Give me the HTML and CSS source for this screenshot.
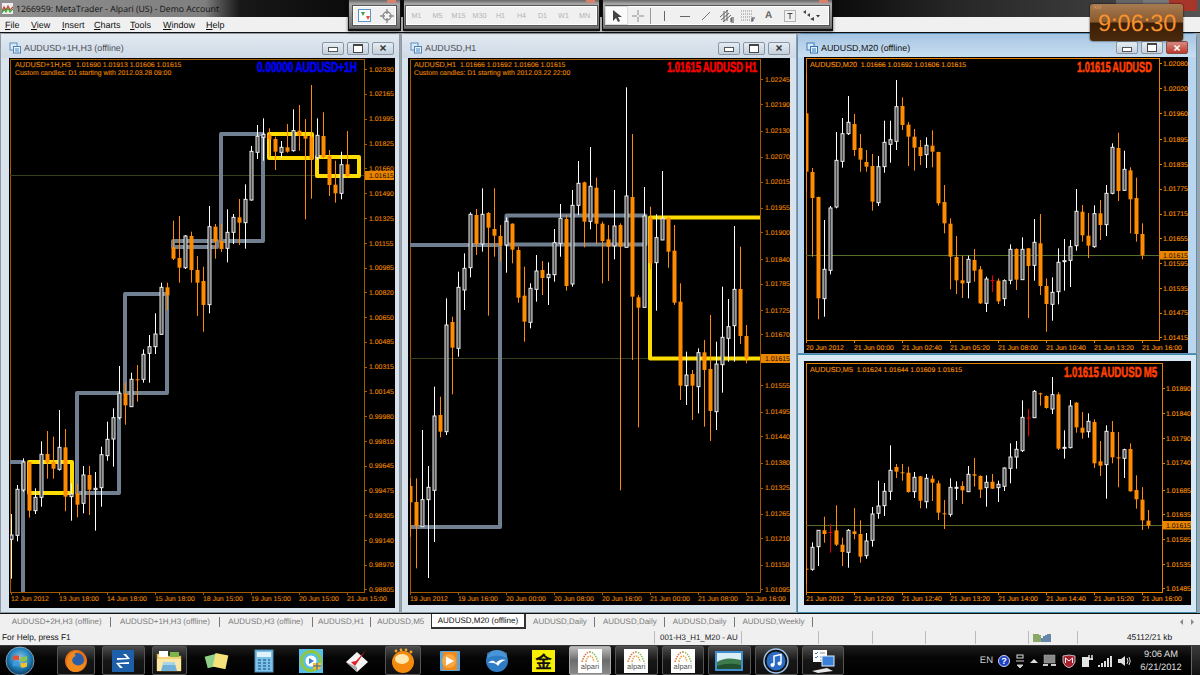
FILE: index.html
```html
<!DOCTYPE html>
<html lang="en">
<head>
<meta charset="utf-8">
<title>1266959: MetaTrader - Alpari (US) - Demo Account</title>
<link rel="stylesheet" href="styles.css">
</head>
<body>
<div class="app">
  <header class="titlebar">
    <svg class="appicon" viewBox="0 0 11 11" width="11" height="11"><rect width="11" height="11" fill="#eee"/><path d="M0 8 L2 4 L4 7 L6 3 L8 7 L11 4" fill="none" stroke="#d33" stroke-width="1.2"/><path d="M0 10 L2 6 L4 9 L6 5 L8 9 L11 6" fill="none" stroke="#3a3" stroke-width="1.2"/></svg>
    <span class="apptitle">1266959: MetaTrader - Alpari (US) - Demo Account</span>
    <div class="caption"><i class="cap-min"></i><i class="cap-max"></i><i class="cap-close"></i></div>
  </header>
  <nav class="menubar">
    <span class="m1"><u>F</u>ile</span><span class="m2"><u>V</u>iew</span><span class="m3"><u>I</u>nsert</span><span class="m4"><u>C</u>harts</span><span class="m5"><u>T</u>ools</span><span class="m6"><u>W</u>indow</span><span class="m7"><u>H</u>elp</span>
  </nav>

  <main class="mdi">
    <section class="win win1">
      <div class="wintitle"><svg class="winicon" viewBox="0 0 12 12" width="12" height="12"><rect x="1" y="1" width="7" height="7" fill="#dbe9f7" stroke="#5b8fc0"/><rect x="4.500" y="4.500" width="7" height="6.500" fill="#eaf3fb" stroke="#4a82b8"/><path d="M6 7h4M6 9h4" stroke="#4a82b8"/></svg><span>AUDUSD+1H,H3 (offline)</span><div class="winbtns"><b class="wb wb-min"></b><b class="wb wb-max"></b><b class="wb wb-x">×</b></div></div>
      <div class="chart" id="c1"></div>
    </section>
    <section class="win win2">
      <div class="wintitle"><svg class="winicon" viewBox="0 0 12 12" width="12" height="12"><rect x="1" y="1" width="7" height="7" fill="#dbe9f7" stroke="#5b8fc0"/><rect x="4.500" y="4.500" width="7" height="6.500" fill="#eaf3fb" stroke="#4a82b8"/><path d="M6 7h4M6 9h4" stroke="#4a82b8"/></svg><span>AUDUSD,H1</span><div class="winbtns"><b class="wb wb-min"></b><b class="wb wb-max"></b><b class="wb wb-x">×</b></div></div>
      <div class="chart" id="c2"></div>
    </section>
    <section class="win win3">
      <div class="wintitle"><svg class="winicon" viewBox="0 0 12 12" width="12" height="12"><rect x="1" y="1" width="7" height="7" fill="#dbe9f7" stroke="#3b7fc0"/><rect x="4.500" y="4.500" width="7" height="6.500" fill="#eaf3fb" stroke="#2e72b4"/><path d="M6 7h4M6 9h4" stroke="#2e72b4"/></svg><span>AUDUSD,M20 (offline)</span><div class="winbtns"><b class="wb wb-min"></b><b class="wb wb-max"></b><b class="wb wb-x wb-red">×</b></div></div>
      <div class="chart" id="c3"></div>
    </section>
    <section class="win win4">
      <div class="chart" id="c4"></div>
    </section>
  </main>

  <div class="tabs">
    <span class="tab">AUDUSD+2H,H3 (offline)</span>
    <span class="tab">AUDUSD+1H,H3 (offline)</span>
    <span class="tab">AUDUSD,H3 (offline)</span>
    <span class="tab tab-h1">AUDUSD,H1</span>
    <span class="tab tab-plain">AUDUSD,M5</span>
    <span class="tab tab-on">AUDUSD,M20 (offline)</span>
    <span class="tab tab-day">AUDUSD,Daily</span>
    <span class="tab tab-day">AUDUSD,Daily</span>
    <span class="tab tab-day">AUDUSD,Daily</span>
    <span class="tab tab-day">AUDUSD,Weekly</span>
    <span class="tabarrows">
      <svg viewBox="0 0 16 8" width="16" height="8"><path d="M4 1 L1 4 L4 7Z" fill="#888"/><path d="M12 1 L15 4 L12 7Z" fill="#888"/></svg>
    </span>
  </div>

  <div class="statusbar">
    <span>For Help, press F1</span>
    <span class="st-profile">001-H3_H1_M20 - AU</span>
    <span></span><span></span><span></span><span></span><span></span>
    <span class="st-conn"><svg viewBox="0 0 18 9" width="18" height="9"><path d="M1 9V1M3 9V1M5 9V1M7 9V2" stroke="#5d8a2c" stroke-width="1.400"/><path d="M9 9V5M11 9V3M13 9V2M15 9V1M17 9V1" stroke="#2b5a8c" stroke-width="1.400"/></svg></span>
    <span class="st-kb">45112/21 kb</span>
  </div>

  <footer class="taskbar">
    <div class="start">
      <svg viewBox="0 0 30 30" width="30" height="30"><defs><radialGradient id="orb" cx="50%" cy="40%" r="60%"><stop offset="0" stop-color="#8cc8ee"/><stop offset=".6" stop-color="#1f7fb8"/><stop offset="1" stop-color="#0a3a60"/></radialGradient></defs><circle cx="15" cy="15" r="14" fill="url(#orb)" stroke="#c8d8e4" stroke-opacity=".6"/><path d="M8 10 q3-1.500 6 0 v4.500 q-3-1.500-6 0Z" fill="#e8502a"/><path d="M15.500 10.500 q3 1.500 6.500-.5 v4.500 q-3.500 2-6.500.5Z" fill="#8ec63f"/><path d="M8 16 q3-1.500 6 0 v4.500 q-3-1.500-6 0Z" fill="#3d9be0"/><path d="M15.500 16.500 q3 1.500 6.500-.5 v4.500 q-3.500 2-6.500.5Z" fill="#f6c02c"/></svg>
      <i class="grip"></i>
    </div>
    <div class="tasks">
      <div class="task on slim"><svg viewBox="0 0 24 24" width="24" height="24"><circle cx="12" cy="12" r="11" fill="#e8701a"/><circle cx="13" cy="11" r="7" fill="#2a5fa8"/><path d="M3 14 C3 6 9 1 16 2 C10 3 10 6 12 7 C8 8 7 12 10 15 C14 18 19 16 22 11 C22 18 17 23 11 23 C6 23 3 19 3 14Z" fill="#f08a1c"/></svg></div>
      <div class="task on"><svg viewBox="0 0 24 24" width="24" height="24"><rect x="1" y="1" width="22" height="22" fill="#1d5fa8"/><path d="M6 9 H16 L12 5 H15 L19 10 L6 11Z M18 15 H8 L12 19 H9 L5 14 L18 13Z" fill="#fff"/></svg></div>
      <div class="task on slim"><svg viewBox="0 0 28 24" width="28" height="24"><path d="M2 5 H11 L13 7 H26 V22 H2Z" fill="#f3d37a" stroke="#b8963c" stroke-width=".6"/><rect x="4" y="2" width="9" height="6" fill="#fff"/><rect x="15" y="3" width="9" height="5" fill="#7ab648"/><path d="M2 10 H26 V22 H2Z" fill="#fbe7a6"/><path d="M8 15 H20 L22 22 H6Z" fill="#6fb1d8"/><rect x="8" y="13" width="12" height="3" fill="#a8d4ec"/></svg></div>
      <div class="task"><svg viewBox="0 0 26 24" width="26" height="24"><rect x="2" y="6" width="12" height="12" fill="#8ed08a" transform="rotate(-15 8 12)"/><rect x="10" y="5" width="13" height="14" fill="#f6e27a" transform="rotate(12 16 12)"/></svg></div>
      <div class="task"><svg viewBox="0 0 22 24" width="22" height="24"><rect x="2" y="1" width="18" height="22" fill="#7cc0e8" stroke="#4f8fb8"/><rect x="4" y="3" width="14" height="5" fill="#dff1fb"/><path d="M5 11h3M10 11h3M15 11h2M5 14h3M10 14h3M15 14h2M5 17h3M10 17h3M15 17h2M5 20h3M10 20h3M15 20h2" stroke="#2f6f9c" stroke-width="1.500"/></svg></div>
      <div class="task"><svg viewBox="0 0 26 26" width="26" height="26"><rect x="1" y="1" width="24" height="24" fill="#5ac0e8"/><circle cx="13" cy="13" r="9.500" fill="none" stroke="#8fc840" stroke-width="3"/><circle cx="13" cy="13" r="5.500" fill="#fff"/><path d="M11 10 L16 13 L11 16Z" fill="#3a7fd0"/><path d="M15 15 h8 v5 q-4 4-8 0Z" fill="#f6c02c"/><path d="M19 15v7M15 18h8" stroke="#2d60b0"/></svg></div>
      <div class="task"><svg viewBox="0 0 24 24" width="24" height="24"><path d="M12 3 L23 13 L12 23 L1 13Z" fill="#f4f4f4"/><path d="M6 13 L10 17 L21 1 L11 12Z" fill="#e21f26"/><path d="M1 13 L12 23 L12 18Z" fill="#aaa"/></svg></div>
      <div class="task on slim"><svg viewBox="0 0 26 26" width="26" height="26"><circle cx="13" cy="14" r="11" fill="#f58a0c"/><ellipse cx="12" cy="11" rx="7" ry="5" fill="#ffe9b0"/><circle cx="6" cy="3" r="1.400" fill="#f6a623"/><circle cx="11" cy="2" r="1.400" fill="#f6a623"/><circle cx="16" cy="2" r="1.400" fill="#f6a623"/><circle cx="21" cy="4" r="1.400" fill="#f6a623"/></svg></div>
      <div class="task"><svg viewBox="0 0 24 24" width="24" height="24"><rect x="2" y="2" width="20" height="20" rx="1" fill="#5ba4d4"/><rect x="5" y="3" width="14" height="18" fill="#f08a1c"/><circle cx="11" cy="12" r="7" fill="#f9a640"/><path d="M8 7.500 L16 12 L8 16.500Z" fill="#fff"/></svg></div>
      <div class="task"><svg viewBox="0 0 24 24" width="24" height="24"><circle cx="12" cy="12" r="11" fill="#2e7cc4"/><path d="M2 9 Q12 4 22 9 V4 Q12-2 2 4Z" fill="#5ba6e4" opacity=".6"/><path d="M3 14 Q8 9 11 14 Q15 9 21 11 Q16 12 13 17 Q10 13 3 14Z" fill="#fff"/></svg></div>
      <div class="task"><div class="goldbox">金</div></div>
      <div class="task on hot"><div class="alpari"><svg viewBox="0 0 20 12" width="20" height="12"><path d="M2 12 Q5 2 10 2" fill="none" stroke="#e0703a" stroke-width="1.500" stroke-dasharray="1.500 1"/><path d="M18 12 Q15 2 10 2" fill="none" stroke="#8cc050" stroke-width="1.500" stroke-dasharray="1.500 1"/><path d="M6 12 Q7 6 10 6 Q13 6 14 12" fill="none" stroke="#e8a040" stroke-width="1.500" stroke-dasharray="1.500 1"/></svg><span>alpari</span></div></div>
      <div class="task on"><div class="alpari"><svg viewBox="0 0 20 12" width="20" height="12"><path d="M2 12 Q5 2 10 2" fill="none" stroke="#e0703a" stroke-width="1.500" stroke-dasharray="1.500 1"/><path d="M18 12 Q15 2 10 2" fill="none" stroke="#8cc050" stroke-width="1.500" stroke-dasharray="1.500 1"/><path d="M6 12 Q7 6 10 6 Q13 6 14 12" fill="none" stroke="#e8a040" stroke-width="1.500" stroke-dasharray="1.500 1"/></svg><span>alpari</span></div></div>
      <div class="task on"><div class="alpari"><svg viewBox="0 0 20 12" width="20" height="12"><path d="M2 12 Q5 2 10 2" fill="none" stroke="#e0703a" stroke-width="1.500" stroke-dasharray="1.500 1"/><path d="M18 12 Q15 2 10 2" fill="none" stroke="#8cc050" stroke-width="1.500" stroke-dasharray="1.500 1"/><path d="M6 12 Q7 6 10 6 Q13 6 14 12" fill="none" stroke="#e8a040" stroke-width="1.500" stroke-dasharray="1.500 1"/></svg><span>alpari</span></div></div>
      <div class="task on"><svg viewBox="0 0 30 22" width="30" height="22"><rect x="1" y="1" width="28" height="20" fill="#3f8fd0"/><rect x="3" y="3" width="24" height="16" fill="#d8eef4"/><path d="M3 12 Q12 6 27 10 V19 H3Z" fill="#3d7a4c"/><path d="M3 16 Q14 12 27 15 V19 H3Z" fill="#22502f"/></svg></div>
      <div class="task on"><svg viewBox="0 0 26 26" width="26" height="26"><circle cx="13" cy="13" r="12" fill="#111" stroke="#9cc4e8" stroke-width="1.500"/><circle cx="13" cy="13" r="9.500" fill="#2a6cc4"/><path d="M11 17 V8 L18 6.500 V15" fill="none" stroke="#fff" stroke-width="1.500"/><circle cx="9.500" cy="17" r="2" fill="#fff"/><circle cx="16.500" cy="15.500" r="2" fill="#fff"/></svg></div>
      <div class="task on"><svg viewBox="0 0 28 24" width="28" height="24"><rect x="4" y="1" width="14" height="12" fill="#fff"/><path d="M6 4l1 1 2-2M6 8l1 1 2-2" stroke="#2b7ac4" fill="none"/><path d="M11 4h5M11 8h5M11 11h4" stroke="#888"/><rect x="13" y="7" width="12" height="10" fill="#3a7fd8" stroke="#dfeefa"/><path d="M3 22 L18 19 L24 22 L9 24Z" fill="#e8e8e8"/></svg></div>
    </div>
    <div class="tray">
      <i class="grip"></i>
      <span class="lang">EN</span>
      <span class="help">?</span>
      <svg viewBox="0 0 10 14" width="10" height="14"><rect x="2" y="1" width="6" height="3" fill="none" stroke="#ddd"/><path d="M1 7 L9 7 M2 11 L8 11 L5 14Z" stroke="#ccc" fill="#ccc"/></svg>
      <svg viewBox="0 0 8 6" width="8" height="6"><path d="M0 5 L4 1 L8 5Z" fill="#ddd"/></svg>
      <svg viewBox="0 0 14 13" width="14" height="13"><rect x="1" y="1" width="11" height="8" fill="#888" stroke="#aaa" stroke-width=".5"/><path d="M0 11h5M8 11h5" stroke="#ccc" stroke-width="2"/></svg>
      <svg viewBox="0 0 14 14" width="14" height="14"><path d="M1 2 Q7 0 13 2 V8 Q12 12 7 14 Q2 12 1 8Z" fill="#a81f2e" stroke="#ddd" stroke-width=".8"/><path d="M3.500 9 V4 L7 7 L10.500 4 V9" fill="none" stroke="#fff"/></svg>
      <svg viewBox="0 0 12 14" width="12" height="14"><rect x="1" y="3" width="7" height="10" fill="#e4e4e4"/><path d="M8 1 V6 M11 1 V6 M7 5 H12" stroke="#eee" stroke-width="1.400"/></svg>
      <svg viewBox="0 0 14 12" width="14" height="12"><path d="M1 12V10M4 12V8M7 12V6M10 12V3M13 12V1" stroke="#ddd" stroke-width="2"/></svg>
      <svg viewBox="0 0 14 12" width="14" height="12"><path d="M1 4H4L8 1V11L4 8H1Z" fill="#ddd"/><path d="M10 3Q12 6 10 9M12 2Q14.500 6 12 10" fill="none" stroke="#ddd"/></svg>
      <div class="clock"><span>9:06 AM</span><span>6/21/2012</span></div>
      <i class="showdesk"></i>
    </div>
  </footer>

  <div class="floatbar fb1">
    <i class="fbclose"></i>
    <div class="fbinner">
      <svg viewBox="0 0 14 14" width="14" height="14"><rect x=".5" y=".5" width="12" height="12" fill="#fff" stroke="#5a94d0"/><path d="M3 3 L7 3 L5 7Z" fill="#3aa04a"/><path d="M8 7 H12 L10 11Z" fill="#e2533a"/></svg>
      <svg class="fbi2" viewBox="0 0 14 14" width="14" height="14"><circle cx="7" cy="7" r="4" fill="none" stroke="#8a8a8a" stroke-width="1.400"/><path d="M7 0V5M7 9V14M0 7H5M9 7H14" stroke="#8a8a8a" stroke-width="1.400"/></svg>
    </div>
  </div>
  <div class="floatbar fb2">
    <i class="fbclose"></i>
    <div class="fbinner tf"><span>M1</span><span>M5</span><span>M15</span><span>M30</span><span>H1</span><span>H4</span><span>D1</span><span>W1</span><span>MN</span></div>
  </div>
  <div class="floatbar fb3">
    <i class="fbclose"></i>
    <div class="fbinner draw">
      <span class="tool sel"><svg viewBox="0 0 12 14" width="12" height="14"><path d="M2 1 V12 L5 9 L7 13 L9 12 L7 8 L11 8Z" fill="#444"/></svg></span>
      <span class="tool"><svg viewBox="0 0 14 14" width="14" height="14"><path d="M7 1V6M7 8V13M1 7H6M8 7H13" stroke="#888"/></svg></span>
      <i class="tsep"></i>
      <span class="tool"><svg viewBox="0 0 14 14" width="14" height="14"><path d="M7.500 2V12" stroke="#666"/></svg></span>
      <span class="tool"><svg viewBox="0 0 14 14" width="14" height="14"><path d="M2 7.500H12" stroke="#666"/></svg></span>
      <span class="tool"><svg viewBox="0 0 14 14" width="14" height="14"><path d="M3 11L11 3" stroke="#777"/></svg></span>
      <span class="tool"><svg viewBox="0 0 16 14" width="16" height="14"><path d="M1 8L9 1M2 11L10 4M4 13L12 6M5 2V13M8 1V12" stroke="#666"/><path d="M12 9H15M12 11H15M12 13H15M12 9V13" stroke="#444"/></svg></span>
      <span class="tool"><svg viewBox="0 0 16 14" width="16" height="14"><path d="M1 2H12M1 5H12M1 8H12M1 11H12" stroke="#888" stroke-dasharray="1 1"/><path d="M12 9V13M12 9H15M12 11H14" stroke="#445"/></svg></span>
      <span class="tool tool-a">A</span>
      <span class="tool"><svg viewBox="0 0 14 14" width="14" height="14"><rect x="1.500" y="1.500" width="11" height="11" fill="none" stroke="#777" stroke-dasharray="1 1"/><path d="M4.500 4.500H9.500M7 4.500V10" stroke="#444"/></svg></span>
      <span class="tool"><svg viewBox="0 0 18 12" width="18" height="12"><path d="M1 2L4 0V4ZM5 5L8 3V7ZM8 9L12 7V11Z" fill="#444"/><path d="M14 5H18L16 7.500Z" fill="#333"/></svg></span>
    </div>
  </div>

  <div class="timewidget">
    <small>AM</small>
    <strong>9:06:30</strong>
  </div>
</div>
<script src="charts.js"></script>
</body>
</html>
```

FILE: styles.css
```css
* { box-sizing: border-box; }
html, body { margin: 0; padding: 0; background: #000; }
body { font-family: "Liberation Sans", Arial, sans-serif; text-rendering: geometricPrecision; }
.app { position: relative; width: 1200px; height: 675px; overflow: hidden; display: flex; flex-direction: column; background: #f0f0f0; }

/* main title bar */
.titlebar { height: 17px; display: flex; align-items: center; padding-left: 2px; gap: 3px; flex: none; position: relative;
  background: linear-gradient(90deg, #8f8f8f 0, #7f7f7f 205px, #4a4a4a 222px, #181818 240px, #0c0c0c 340px, #0c0c0c 840px, #262626 950px, #3a3a3a 1090px, #555 1200px); }
.apptitle { font-family: "Open Sans", sans-serif; font-size: 8.7px; color: #111; white-space: nowrap; }
.caption { position: absolute; right: 3px; top: 0; display: flex; height: 11px; }
.caption i { display: block; height: 11px; }
.cap-min { width: 27px; background: #666; }
.cap-max { width: 26px; background: #777; }
.cap-close { width: 28px; background: #a8352a; }

.menubar { height: 16px; flex: none; position: relative; display: flex; align-items: center; font-size: 9px; color: #111; background: #f0f0f0; border-bottom: 1px solid #111; padding-left: 5px; }
.menubar u { text-decoration: underline; }
.m1 { width: 26px; } .m2 { width: 31px; } .m3 { width: 32px; } .m4 { width: 36px; } .m5 { width: 33px; } .m6 { width: 43px; }

/* MDI */
.mdi { height: 580px; flex: none; position: relative; background: #9aa4ad; }
.win { position: absolute; top: 0; display: flex; flex-direction: column; border: 1px solid #8e98a3; border-radius: 5px 5px 0 0; background: #d8e3ee; }
.win1 { left: 0; width: 400px; height: 580px; }
.win2 { left: 401px; width: 396px; height: 580px; }
.win3 { left: 797px; width: 400px; height: 321px; background: #b9d6ee; border-color: #5f8fb5; }
.win4 { left: 797px; width: 400px; top: 321px; height: 259px; background: #d8e8f5; border-color: #3c8ea8; border-radius: 0; }

.wintitle { height: 24px; flex: none; display: flex; align-items: center; font-size: 8.9px; color: #4a4f55; padding-top: 4px; background: linear-gradient(#e2e9f1, #cfdae6); }
.win3 .wintitle { height: 23px; background: linear-gradient(#a7c6e3, #c8def0); color: #111; }
.winicon { margin: 0 3px 0 8px; flex: none; }
.winbtns { margin-left: auto; display: flex; gap: 3px; margin-right: 5px; }
.win2 .winbtns { margin-right: 6px; }
.win3 .winbtns { margin-right: 8px; }
.wb { display: flex; align-items: center; justify-content: center; width: 22px; height: 13px; border: 1px solid #8a96a3; border-radius: 2px; background: linear-gradient(#e6edf4, #c3d0dc); color: #333; font-size: 12px; line-height: 1; font-weight: 700; }
.wb-min::before { content: ""; width: 8px; height: 3px; border: 1px solid #555; background: #fff; margin-top: 3px; }
.wb-max::before { content: ""; width: 8px; height: 6px; border: 1px solid #444; border-top-width: 2px; background: #fff; }
.wb-red { background: linear-gradient(#d98a80, #bb3a2c); color: #fff; border-color: #8a4a44; }

.chart { flex: none; background: #000; overflow: hidden; }
.chart svg { display: block; }
.win1 .chart { width: 386px; height: 550px; margin: 0 0 0 8px; }
.win2 .chart { width: 382px; height: 547px; margin: 0 0 0 6px; }
.win3 .chart { width: 384px; height: 296px; margin: 0 0 0 6px; }
.win4 .chart { width: 387px; height: 244px; margin: 6px 0 0 6px; }

/* chart drawing */
.c-frame { fill: none; shape-rendering: crispEdges; }
.dim .c-frame, .dim .c-tick { stroke: #a55a00; }
.lit .c-frame, .lit .c-tick { stroke: #e58300; }
.c-tick { shape-rendering: crispEdges; }
.c-text { font-family: "Liberation Sans", sans-serif; font-size: 6.9px; white-space: pre; stroke-width: .12px; }
.c-name { font-size: 7.3px; }
.dim .c-text { fill: #e08400; stroke: #e08400; }
.lit .c-text { fill: #f59000; stroke: #f59000; }
.c-big { font-family: "Liberation Sans", sans-serif; font-weight: 700; font-size: 14.5px; stroke-width: .55px; word-spacing: -1px; }
.c-bid { stroke-width: 1; shape-rendering: crispEdges; }
.dim .c-bid { stroke: #36421c; }
.lit .c-bid { stroke: #5a6e2c; }
.c-pricebox { fill: #e98500; }
.c-pricetxt { font-family: "Liberation Sans", sans-serif; font-size: 6.9px; fill: #1a0d00; }
.c-gray { fill: none; stroke: #708090; stroke-width: 4; stroke-linejoin: round; }
.c-gold { fill: none; stroke: #ffdc00; stroke-width: 4; stroke-linejoin: round; }
.c-wick-w { fill: #fff; }
.c-wick-o { fill: #ff8c00; }
.c-wick-r { fill: #ee0000; }
.c-body-o { fill: #ff8c00; }
.c-body-w { fill: #4a4a4a; stroke: #ececec; stroke-width: 1; }
.c-body-r { fill: #ee0000; }

/* tabs & status */
.tabs { height: 17px; flex: none; display: flex; align-items: center; background: #f0f0f0; border-top: 1px solid #111; padding-left: 3px; font-size: 8px; color: #7b7b7b; white-space: nowrap; position: relative; }
.tab { padding: 0 8.7px; border-right: 1px solid #777; height: 10px; line-height: 10px; flex: none; }
.tab-h1 { padding: 0 6px 0 5px; }
.tab-plain { border-right: 0; padding: 0 7px 0 6px; }
.tab-day { padding: 0 7.5px; }
.tab-on { height: 15px; line-height: 13px; background: #fff; color: #111; border: 1px solid #333; border-top: 0; border-right-width: 2px; border-bottom-width: 2px; margin-top: -1px; padding: 0 5.5px; }
.tabarrows { margin-left: auto; margin-right: 5px; display: flex; }
.statusbar { height: 15px; flex: none; display: grid; grid-template-columns: 655px 87px 77px 54px 53px 50px 53px 49px 1fr; align-items: center; font-size: 8.3px; color: #111; background: #f0f0f0; white-space: nowrap; }
.statusbar span { display: block; height: 13px; line-height: 13px; padding-left: 2px; border-right: 1px solid #bbb; overflow: hidden; }
.statusbar .st-profile { padding-left: 5px; color: #222; font-size: 7.9px; }
.statusbar .st-conn { padding-left: 4px; }
.statusbar .st-conn svg { display: block; margin-top: 2px; }
.statusbar .st-kb { border-right: 0; padding-left: 49px; }

/* taskbar */
.taskbar { height: 30px; flex: none; display: flex; background: linear-gradient(#1c1c1c, #060606 40%, #000); border-top: 1px solid #3a3a3a; color: #eee; }
.start { width: 52px; flex: none; display: flex; align-items: center; padding-left: 5px; gap: 8px; }
.grip { display: block; width: 6px; height: 24px; background-image: radial-gradient(#555 40%, transparent 45%); background-size: 2px 2px; flex: none; }
.tasks { display: grid; grid-template-columns: 48px 46.5px 45.5px 49px 46px 47px 46px 46px 47.5px 46.5px 47px 46px 46.5px 46.5px 46.5px 47px 46.5px; flex: none; }
.task { display: flex; align-items: center; justify-content: center; height: 29px; margin: 0 2px; }
.task.slim { margin: 0 5px; }
.task.on { background: linear-gradient(#4a4a4a, #171717 50%, #111); border: 1px solid #555; border-radius: 2px; }
.task.hot { background: linear-gradient(#bdbdbd, #6c6c6c 50%, #8a8a8a); border-color: #aaa; }
.goldbox { width: 23px; height: 22px; background: #f8f000; color: #111; font-family: "Noto Sans CJK SC", sans-serif; font-size: 17px; line-height: 22px; text-align: center; font-weight: 700; }
.alpari { width: 24px; height: 24px; background: #fff; display: flex; flex-direction: column; align-items: center; overflow: hidden; }
.alpari svg { flex: none; margin-top: 1px; }
.alpari span { font-size: 7.5px; line-height: 9px; color: #555; }

.tray { margin-left: auto; display: flex; align-items: center; gap: 5px; flex: none; }
.tray .grip { height: 24px; }
.lang { font-size: 9.5px; color: #ccc; }
.help { width: 12px; height: 12px; border-radius: 50%; background: #1c3fc8; border: 1px solid #d0d8f0; color: #fff; font-size: 9px; font-weight: 700; line-height: 10px; text-align: center; }
.clock { width: 50px; display: flex; flex-direction: column; align-items: center; font-size: 9.3px; line-height: 13px; color: #ddd; }
.showdesk { display: block; width: 9px; height: 29px; background: linear-gradient(#3a3a3a, #111); border-left: 1px solid #666; }

/* floating toolbars */
.floatbar { position: absolute; top: 0; height: 31px; background: linear-gradient(#666, #a9a9a9 4px, #777 27px, #555); border: 1px solid #111; border-top: 0; border-bottom-width: 2px; box-shadow: 0 1px 3px rgba(0,0,0,.6); padding: 5px 3px 0; }
.fbclose { position: absolute; top: 0; right: 4px; width: 9px; height: 3px; background: #d8806c; }
.fbinner { height: 21px; background: #f0f0f0; border: 1px solid #555; box-shadow: inset 0 0 0 1px #fff; display: flex; align-items: center; }
.fb1 { left: 348px; width: 53px; }
.fb1 .fbinner { padding-left: 5px; gap: 8px; }
.fb2 { left: 403px; width: 197px; padding: 5px 1px 0; }
.fb2 .fbinner { font-size: 7.2px; color: #b4b4b4; }
.fb2 .fbinner span { width: 21px; flex: none; text-align: center; }
.fb3 { left: 602px; width: 231px; padding: 5px 2px 0; }
.tool { display: flex; align-items: center; justify-content: center; width: 21px; height: 17px; flex: none; }
.tool.sel { background: #fafafa; box-shadow: 0 0 0 1px #ddd; }
.tool-a { font-size: 10px; font-weight: 700; color: #666; }
.tsep { display: block; width: 1px; height: 16px; background: #999; margin: 0 2px; flex: none; }

/* desktop clock gadget */
.timewidget { position: absolute; left: 1090px; top: 4px; width: 93px; height: 37px; border-radius: 3px; background: linear-gradient(#a67a50, #8b5a2e 48%, #3c1e05 52%, #4a2a0d); box-shadow: 0 0 2px #000; color: #f8922c; }
.timewidget small { position: absolute; left: 3px; top: 1px; font-size: 5.5px; color: #d49a5a; }
.timewidget strong { position: absolute; left: 8px; top: 4px; font-weight: 400; font-size: 23.5px; line-height: 30px; white-space: nowrap; }
```

FILE: charts.js
```js
// Candle values are [kind, high, bodyTop, bodyBottom, low] in traced units (3 per pixel).
var CHARTS = [
 { id:'c1', tone:'dim', vb:[9,58,386,550], frame:[10,59,364,592], x0:11, oy:100,
   head:['AUDUSD+1H,H3','1.01690 1.01913 1.01606 1.01615',61,'Custom candles: D1 starting with 2012.03.28 09:00'], hx:15, hy:67.2,
   big:{t:'0.00000 AUDUSD+1H',x:257,w:100,y:72,c:'#0000ff'},
   bid:175.5, tickX:364, labX:369, plabel:[365,171,29,9],
   axis:[['1.02330',69],['1.02165',93.8],['1.01995',118.7],['1.01825',143.5],['1.01660',168.3],['1.01490',193],['1.01325',218],['1.01155',243],['1.00985',267.5],['1.00820',292.3],['1.00650',317],['1.00485',341.7],['1.00315',366.7],['1.00145',391.3],['0.99980',416],['0.99810',441],['0.99645',465.7],['0.99475',490.3],['0.99305',515],['0.99140',540],['0.98970',564.7],['0.98805',589.3]],
   timeY:601, times:[[11,'12 Jun 2012'],[59,'13 Jun 18:00'],[107,'14 Jun 18:00'],[155,'15 Jun 18:00'],[203,'18 Jun 15:00'],[251,'19 Jun 15:00'],[299,'20 Jun 15:00'],[347,'21 Jun 15:00']],
   gray:[[221,134,42,107],[125,294,42,99],[77,393,42,100],[5,462,18,160],[173,241,44,6],[217,241,8,0]],
   gold:[[29,462,43,31],[269,134,43,24],[317,157,42,19]],
   candles:`W 1242 1305 1318 1436|W 1155 1168 1306 1324|W 1075 1086 1170 1175|O 1085 1086 1232 1253|W 1165 1192 1232 1242|W 1024 1063 1192 1220|O 993 1062 1088 1136|O 1010 1086 1106 1136|W 930 1042 1108 1112|O 987 1042 1190 1234|W 1150 1182 1190 1262|O 1152 1180 1214 1252|W 1098 1125 1210 1240|O 1098 1125 1169 1245|W 1116 1165 1169 1292|W 1040 1064 1163 1220|W 965 1018 1067 1082|W 925 953 1017 1100|W 798 880 953 958|O 848 880 916 974|W 818 838 920 920|O 795 838 840 905|W 748 763 838 848|W 705 740 760 848|W 640 702 740 762|W 548 562 703 705|O 548 562 586 630|O 362 442 476 480|O 348 474 503 548|W 405 408 503 507|O 395 408 510 548|O 468 510 548 648|O 500 543 615 695|W 318 380 614 640|O 372 380 425 476|O 372 423 447 456|W 328 397 445 487|W 342 352 397 432|O 297 352 368 435|W 253 298 368 446|W 138 154 300 302|W 75 109 157 177|W 55 103 112 182|O 85 104 118 170|O 110 117 155 210|W 123 142 157 174|O 72 142 155 158|W 28 92 152 155|O 15 92 107 152|O 57 108 116 358|O -45 110 178 296|W 55 106 173 180|O 37 108 172 175|O 150 168 255 288|O 182 254 280 308|W 155 194 280 298|O 93 193 228 232` },
 { id:'c2', tone:'dim', vb:[408,58,382,547], frame:[410,59,760,592], x0:410, oy:60,
   head:['AUDUSD,H1','1.01666 1.01692 1.01606 1.01615',46,'Custom candles: D1 starting with 2012.03.22 22:00'], hx:414, hy:67.2,
   big:{t:'1.01615 AUDUSD H1',x:667,w:90,y:72,c:'#ff0000'},
   bid:358.5, tickX:760, labX:765, plabel:[761,354,29,9],
   axis:[['1.02245',79.3],['1.02190',104],['1.02130',130.7],['1.02070',156.7],['1.02015',181.7],['1.01955',207.7],['1.01900',232.3],['1.01840',259],['1.01785',283.7],['1.01725',310],['1.01670',334.3],['1.01555',385.3],['1.01495',411.7],['1.01440',436.3],['1.01380',462.7],['1.01325',487.7],['1.01265',513.7],['1.01210',538.3],['1.01150',564.7],['1.01095',589.3]],
   timeY:601, times:[[410,'19 Jun 2012'],[458,'19 Jun 16:00'],[506,'20 Jun 00:00'],[554,'20 Jun 08:00'],[602,'20 Jun 16:00'],[650,'21 Jun 00:00'],[698,'21 Jun 08:00'],[746,'21 Jun 16:00']],
   gray:[[400,245,100,282],[506.5,215.5,139,29]],
   gold:[[650,217.5,120,141]],
   candles:`O 1255 1278 1327 1430|O 1255 1326 1398 1525|W 1110 1319 1400 1401|W 1218 1282 1319 1554|W 980 1068 1291 1446|O 1010 1065 1115 1132|W 715 795 1115 1125|O 770 786 863 1003|W 635 682 865 890|W 580 625 690 750|W 457 463 623 652|O 447 465 552 585|W 385 463 552 575|O 456 459 503 767|O 385 507 527 590|O 495 528 557 605|W 472 484 555 638|O 490 491 569 610|O 560 570 713 728|O 620 707 785 845|W 670 685 787 805|W 585 633 688 725|O 603 630 654 705|W 607 643 653 735|W 507 548 644 665|W 432 475 550 590|O 465 477 678 692|W 390 436 672 680|W 303 370 436 465|O 365 367 485 562|W 261 379 484 508|O 353 383 491 552|O 485 491 543 670|O 495 538 560 663|W 390 498 558 598|O 490 495 560 1291|W 82 408 562 563|O 222 411 710 900|O 705 712 743 1102|W 381 468 742 743|O 440 473 610 628|W 463 533 608 752|W 333 476 540 540|O 470 474 575 623|O 495 572 728 735|O 670 725 977 1020|W 875 945 977 1035|O 930 942 977 1080|W 865 878 980 1060|O 840 877 930 1100|O 765 927 1053 1143|W 845 912 1055 1110|W 680 832 914 998|W 717 800 835 905|W 498 688 797 905|O 560 687 828 852|O 795 828 895 910` },
 { id:'c3', tone:'lit', vb:[804,57,384,296], frame:[806,58,1159,340], x0:806, oy:50,
   head:['AUDUSD,M20','1.01666 1.01692 1.01606 1.01615',50.7], hx:810, hy:67.2,
   big:{t:'1.01615 AUDUSD',x:1077,w:75,y:72,c:'#ff4000'},
   bid:255, tickX:1159, labX:1163, plabel:[1160,251,28,8.5],
   axis:[['1.02080',63.3],['1.02020',88.3],['1.01960',113],['1.01895',139.3],['1.01835',164],['1.01775',188.7],['1.01715',213.7],['1.01655',238.3],['1.01595',263.3],['1.01535',288],['1.01475',312.7],['1.01415',337.3]],
   timeY:349.5, times:[[806,'20 Jun 2012'],[854,'21 Jun 00:00'],[902,'21 Jun 02:40'],[950,'21 Jun 05:20'],[998,'21 Jun 08:00'],[1046,'21 Jun 10:40'],[1094,'21 Jun 13:20'],[1142,'21 Jun 16:00']],
   gray:[], gold:[],
   candles:`O 72 190 365 422|O 354 366 444 620|O 440 441 745 808|W 510 658 746 800|W 468 474 661 673|W 246 331 471 475|W 204 251 334 353|W 138 217 251 255|O 192 222 300 318|O 252 294 329 365|O 300 336 350 365|O 312 348 455 482|W 318 350 458 468|W 212 277 350 368|W 212 269 283 338|W 90 170 274 300|O 142 168 225 240|O 216 224 260 348|O 237 260 293 362|O 270 291 318 345|W 262 286 314 354|O 241 287 305 352|O 305 306 460 467|O 405 456 520 550|O 505 521 620 718|O 558 621 691 732|O 617 691 700 744|W 617 628 697 745|O 597 630 662 695|O 648 658 760 762|W 680 687 760 786|R 676 690 691 726|O 685 692 754 762|W 688 692 746 768|W 583 598 691 703|O 595 597 689 720|W 562 598 689 690|O 594 595 648 804|W 507 577 646 692|O 492 580 708 735|O 685 708 762 845|W 682 727 763 812|W 595 637 725 763|W 567 632 634 722|W 570 590 631 711|W 417 484 587 602|O 465 485 556 575|O 489 557 587 624|W 466 491 590 593|O 450 490 525 570|W 405 430 524 558|W 280 292 430 433|O 248 294 423 453|W 302 358 421 423|O 352 361 448 550|O 383 444 552 575|O 520 552 616 628` },
 { id:'c4', tone:'lit', vb:[804,361,387,244], frame:[806,363,1162,592], x0:806, oy:350,
   head:['AUDUSD,M5','1.01624 1.01644 1.01609 1.01615',46.7], hx:810, hy:371.7,
   big:{t:'1.01615 AUDUSD M5',x:1064,w:93,y:377,c:'#ff4000'},
   bid:525, tickX:1162, labX:1166, plabel:[1163,521,28,8.5],
   axis:[['1.01890',388.3],['1.01840',413.3],['1.01790',438],['1.01740',462.7],['1.01685',490],['1.01635',514],['1.01585',539],['1.01535',564],['1.01485',588.3]],
   timeY:601, times:[[806,'21 Jun 2012'],[854,'21 Jun 12:00'],[902,'21 Jun 12:40'],[950,'21 Jun 13:20'],[998,'21 Jun 14:00'],[1046,'21 Jun 14:40'],[1094,'21 Jun 15:20'],[1142,'21 Jun 16:00']],
   gray:[], gold:[],
   candles:`O 642 656 658 702|W 577 592 658 662|W 540 541 590 648|O 500 541 552 578|R 522 546 548 608|O 466 541 584 588|O 563 584 606 648|W 537 541 607 653|O 474 544 552 568|O 511 552 620 638|W 549 573 617 626|W 471 492 571 590|W 392 468 490 506|W 399 424 467 498|W 286 361 424 450|O 342 351 365 384|O 342 367 369 392|O 350 368 426 428|W 366 382 425 444|O 378 379 452 475|W 372 385 455 475|O 376 386 398 453|O 392 400 488 510|O 450 490 491 537|W 385 412 493 500|W 394 412 415 450|O 394 408 421 462|W 348 373 425 426|O 324 373 377 410|O 376 378 419 444|W 376 397 413 470|O 372 395 416 417|W 392 403 413 456|W 352 354 409 423|W 280 321 355 400|W 273 298 321 356|W 151 202 302 306|R 177 203 205 259|W 120 124 203 203|O 128 130 133 167|O 136 138 174 176|W 81 134 177 192|O 127 133 296 300|W 241 292 294 326|W 150 168 293 295|O 156 158 232 248|O 186 233 248 266|W 190 214 245 263|O 208 216 340 354|O 273 334 347 378|W 226 244 344 446|O 213 246 322 340|O 246 322 323 412|W 296 299 325 384|O 280 297 424 425|O 376 420 448 476|O 411 449 511 540|O 480 512 527 536` }
];

function esc(s){ return s.replace(/&/g,'&amp;').replace(/</g,'&lt;'); }

function drawChart(c){
  var f=c.frame, o=[], id='clip-'+c.id, y=function(v){return +(c.oy+v/3).toFixed(2);};
  o.push('<svg class="'+c.tone+'" xmlns="http://www.w3.org/2000/svg" width="'+c.vb[2]+'" height="'+c.vb[3]+'" viewBox="'+c.vb.join(' ')+'">');
  o.push('<defs><clipPath id="'+id+'"><rect x="'+f[0]+'" y="'+f[1]+'" width="'+(f[2]-f[0])+'" height="'+(f[3]-f[1])+'"/></clipPath></defs>');
  o.push('<rect class="c-frame" x="'+(f[0]+.5)+'" y="'+(f[1]+.5)+'" width="'+(f[2]-f[0])+'" height="'+(f[3]-f[1])+'"/>');
  o.push('<g clip-path="url(#'+id+')">');
  o.push('<line class="c-bid" x1="'+f[0]+'" x2="'+f[2]+'" y1="'+c.bid+'" y2="'+c.bid+'"/>');
  c.gray.forEach(function(r){o.push('<rect class="c-gray" x="'+r[0]+'" y="'+r[1]+'" width="'+r[2]+'" height="'+r[3]+'"/>');});
  c.gold.forEach(function(r){o.push('<rect class="c-gold" x="'+r[0]+'" y="'+r[1]+'" width="'+r[2]+'" height="'+r[3]+'"/>');});
  c.candles.split('|').forEach(function(line,i){
    var p=line.split(' '), k=p[0], x=c.x0+6*i, hi=y(+p[1]), t=y(+p[2]), b=y(+p[3]), lo=y(+p[4]);
    var cls=k==='W'?'w':k==='R'?'r':'o';
    o.push('<rect class="c-wick-'+cls+'" x="'+x+'" y="'+hi+'" width="1" height="'+(lo-hi).toFixed(2)+'"/>');
    if(k==='W'){
      o.push('<rect class="c-body-w" x="'+(x-1)+'" y="'+t+'" width="3" height="'+Math.max(b-t,1).toFixed(2)+'"/>');
    } else if(k==='R'){
      o.push('<rect class="c-body-r" x="'+(x-1.5)+'" y="'+t+'" width="4" height="1"/>');
    } else {
      o.push('<rect class="c-body-o" x="'+(x-1.5)+'" y="'+t+'" width="4" height="'+Math.max(b-t,1).toFixed(2)+'"/>');
    }
  });
  o.push('</g>');
  c.axis.forEach(function(a){
    o.push('<line class="c-tick" x1="'+(c.tickX+1)+'" x2="'+(c.tickX+3)+'" y1="'+Math.round(a[1])+'.5" y2="'+Math.round(a[1])+'.5"/>');
    o.push('<text class="c-text" x="'+c.labX+'" y="'+(a[1]+2.5)+'">'+a[0]+'</text>');
  });
  c.times.forEach(function(t){
    o.push('<line class="c-tick" x1="'+(t[0]+.5)+'" x2="'+(t[0]+.5)+'" y1="'+(f[3]+1)+'" y2="'+(f[3]+3)+'"/>');
    o.push('<text class="c-text" x="'+t[0]+'" y="'+c.timeY+'">'+t[1]+'</text>');
  });
  var h=c.head;
  o.push('<text class="c-text" y="'+c.hy+'"><tspan class="c-name" x="'+c.hx+'">'+esc(h[0])+'</tspan><tspan x="'+(c.hx+h[2])+'">'+h[1]+'</tspan></text>');
  if(h[3]) o.push('<text class="c-text" x="'+c.hx+'" y="'+(c.hy+7.7)+'">'+esc(h[3])+'</text>');
  var g=c.big;
  o.push('<text class="c-big" fill="'+g.c+'" stroke="'+g.c+'">'+esc(g.t)+'</text>');
  var pl=c.plabel;
  o.push('<rect class="c-pricebox" x="'+pl[0]+'" y="'+pl[1]+'" width="'+pl[2]+'" height="'+pl[3]+'"/>');
  o.push('<text class="c-pricetxt" x="'+c.labX+'" y="'+(pl[1]+pl[3]/2+2.5)+'">1.01615</text>');
  o.push('</svg>');
  var host=document.getElementById(c.id);
  host.innerHTML=o.join('');
  // The heavy price caption is a condensed face: squeeze it to the width it occupies on the chart.
  var big=host.querySelector('.c-big');
  big.setAttribute('transform','translate('+g.x+' '+g.y+') scale('+(g.w/big.getComputedTextLength()).toFixed(4)+' 1)');
}
CHARTS.forEach(drawChart);
```
